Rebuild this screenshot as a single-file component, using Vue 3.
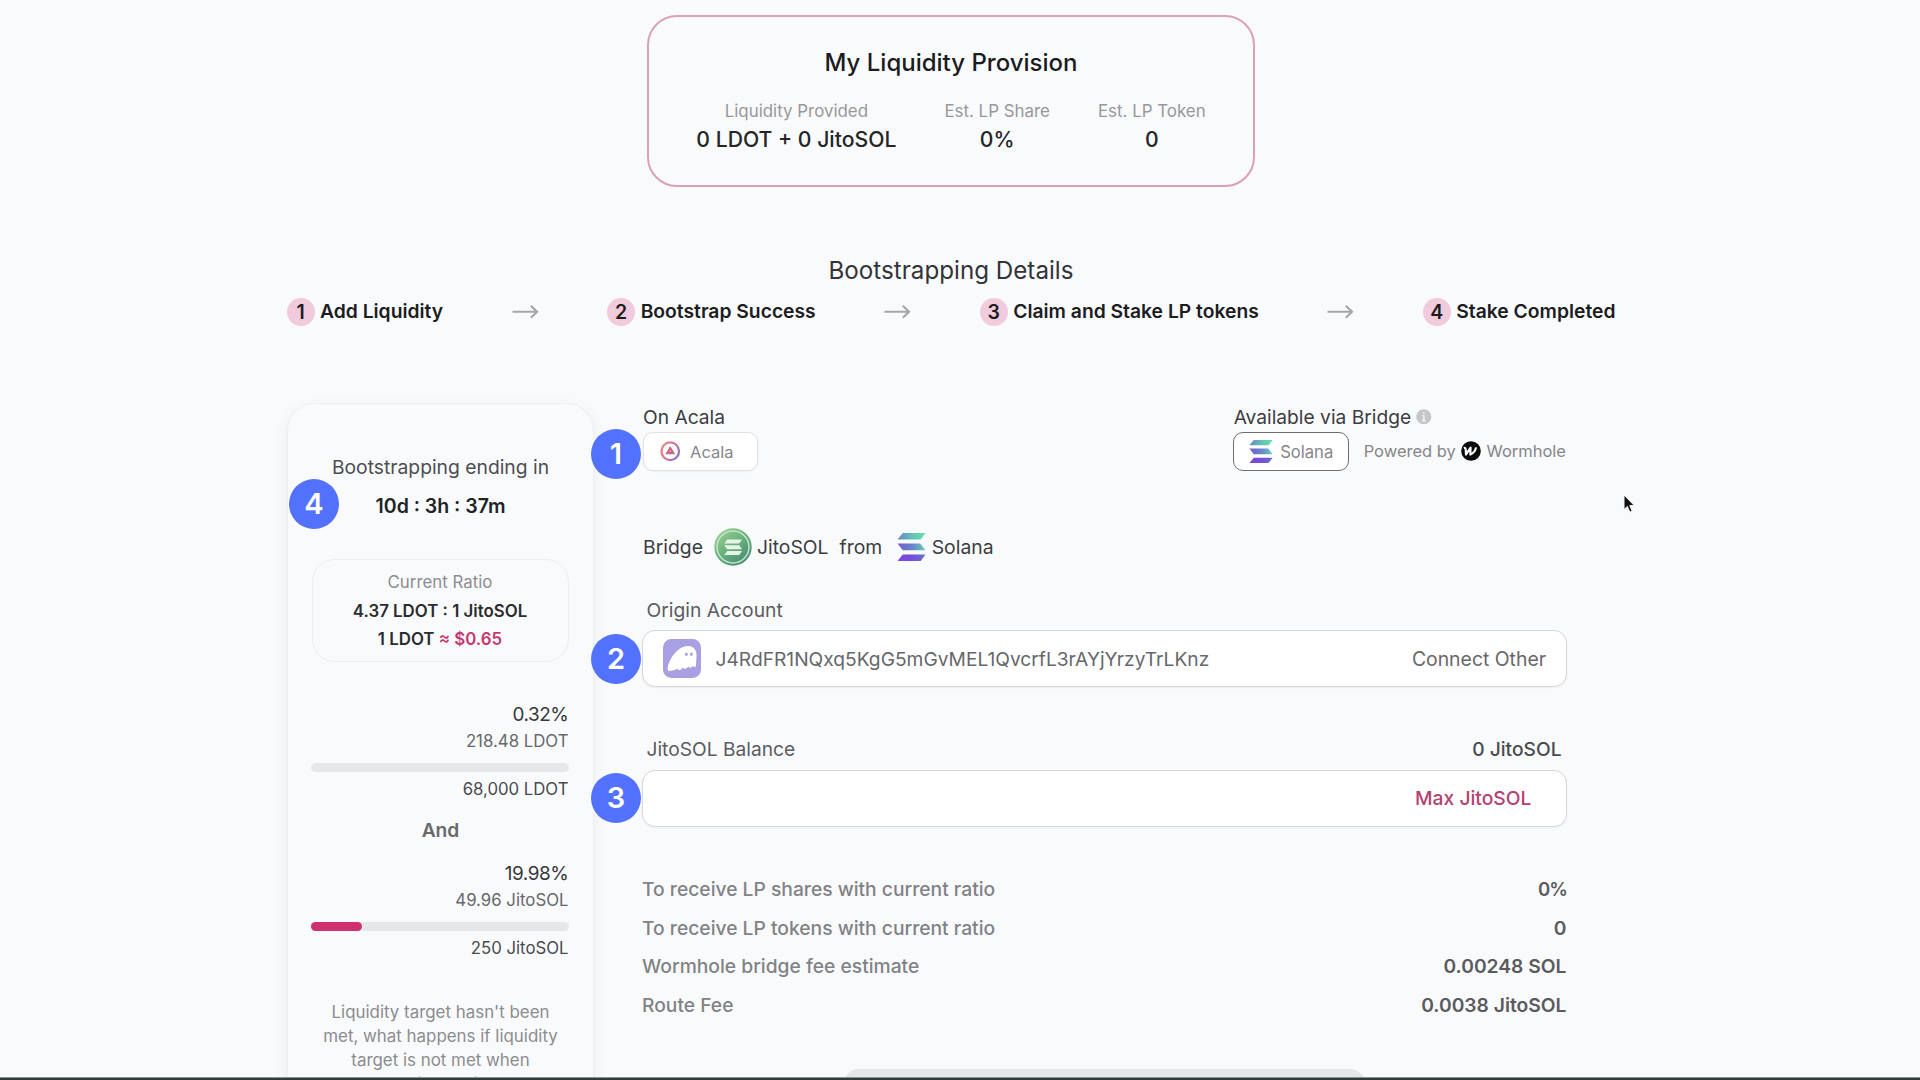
<script setup>
const stats = [
  { label: 'Liquidity Provided', value: '0 LDOT + 0 JitoSOL' },
  { label: 'Est. LP Share', value: '0%' },
  { label: 'Est. LP Token', value: '0' },
]
const steps = ['Add Liquidity', 'Bootstrap Success', 'Claim and Stake LP tokens', 'Stake Completed']
const targets = [
  { percent: '0.32%', current: '218.48 LDOT', goal: '68,000 LDOT', fill: 0 },
  { percent: '19.98%', current: '49.96 JitoSOL', goal: '250 JitoSOL', fill: 19.98 },
]
const summary = [
  { label: 'To receive LP shares with current ratio', value: '0%', tight: true },
  { label: 'To receive LP tokens with current ratio', value: '0' },
  { label: 'Wormhole bridge fee estimate', value: '0.00248 SOL' },
  { label: 'Route Fee', value: '0.0038 JitoSOL' },
]
</script>

<template>
  <div class="page">
    <section class="provision">
      <h2>My Liquidity Provision</h2>
      <div class="stats">
        <div v-for="s in stats" :key="s.label" class="stat">
          <span class="stat-label">{{ s.label }}</span>
          <span class="stat-value">{{ s.value }}</span>
        </div>
      </div>
    </section>

    <h2 class="details-title">Bootstrapping Details</h2>
    <div class="steps">
      <template v-for="(step, i) in steps" :key="step">
        <svg v-if="i" class="arrow" viewBox="0 0 28 16"><path d="M0.5 8H26M19.5 1.8L26 8L19.5 14.2" /></svg>
        <div class="step"><span class="step-num">{{ i + 1 }}</span>{{ step }}</div>
      </template>
    </div>

    <main class="main">
      <aside class="panel">
        <div class="ending">Bootstrapping ending in</div>
        <div class="countdown">10d : 3h : 37m<span class="badge badge-4">4</span></div>
        <div class="ratio">
          <span class="ratio-label">Current Ratio</span>
          <span>4.37 LDOT : 1 JitoSOL</span>
          <span>1 LDOT <em>≈ $0.65</em></span>
        </div>
        <template v-for="(t, i) in targets" :key="t.goal">
          <div v-if="i" class="and">And</div>
          <div class="target">
            <span class="percent">{{ t.percent }}</span>
            <span class="current">{{ t.current }}</span>
            <div class="track"><div v-if="t.fill" class="fill" :style="{ width: t.fill + '%' }"></div></div>
            <span class="goal">{{ t.goal }}</span>
          </div>
        </template>
        <p class="note">Liquidity target hasn't been<br />met, what happens if liquidity<br />target is not met when<br />bootstrapping period ends?</p>
      </aside>

      <section class="form">
        <div class="networks">
          <div>
            <div class="net-title">On Acala</div>
            <div class="chip chip-acala">
              <svg class="acala-icon" viewBox="0 0 20 20">
                <defs>
                  <linearGradient id="ac" x1="0" y1="0.2" x2="1" y2="0.9">
                    <stop offset="0" stop-color="#e8857c" /><stop offset="0.5" stop-color="#d0749a" /><stop offset="1" stop-color="#7a72d6" />
                  </linearGradient>
                </defs>
                <circle cx="10" cy="10" r="8.6" fill="none" stroke="url(#ac)" stroke-width="2.2" />
                <path d="M10 4.8L14.8 13H5.2Z" fill="#cf6482" />
                <path d="M10 9.2L10.8 10.6H9.2Z" fill="#fff" />
              </svg>
              <span>Acala</span>
              <span class="badge badge-1">1</span>
            </div>
          </div>
          <div class="bridge-net">
            <div class="net-title">Available via Bridge
              <svg class="info" viewBox="0 0 16 16"><circle cx="8" cy="8" r="7.8" fill="#c5c6c8" /><path d="M8 3.2V5M6.3 7H8.2V11.8M6 12H10.2" stroke="#eceef0" stroke-width="1.6" fill="none" /></svg>
            </div>
            <div class="bridge-row">
              <div class="chip chip-solana">
                <svg class="sol-small" viewBox="0 0 30 30">
                  <path d="M6 0.5H29.5L24.5 7.3H0.5Z" fill="url(#s1)" /><path d="M0.5 11.4H24L29.5 18.4H6Z" fill="url(#s2)" /><path d="M6 22.7H29.5L24.5 29.5H0.5Z" fill="url(#s3)" />
                </svg>
                <span>Solana</span>
              </div>
              <span class="powered">Powered by
                <svg class="wormhole" viewBox="0 0 20 20"><circle cx="10" cy="10" r="9.8" fill="#0a0a0a" /><path d="M2.8 7C4.5 6.3 5 7.5 4.9 13.6L9.6 6.6L9.3 13.6C13 12 14.6 9.5 15 6.4" fill="none" stroke="#fff" stroke-width="2.1" stroke-linejoin="round" /></svg>
                Wormhole</span>
            </div>
          </div>
        </div>

        <div class="bridge-line">
          <span>Bridge</span>
          <svg class="jito" viewBox="0 0 38 38">
            <defs>
              <linearGradient id="jt" x1="0.1" y1="0" x2="0.9" y2="1">
                <stop offset="0" stop-color="#9fd18f" /><stop offset="0.5" stop-color="#65b07e" /><stop offset="1" stop-color="#43846f" />
              </linearGradient>
            </defs>
            <circle cx="19" cy="19" r="18.7" fill="url(#jt)" />
            <circle cx="19" cy="19" r="16" fill="none" stroke="#c5e4c9" stroke-width="1.5" />
            <g fill="#e6f4e6">
              <path d="M13.2 11.5H28L25.2 15.6H10.2Z" /><path d="M10.2 17.2H25.2L28 21.3H13.2Z" /><path d="M13.2 23H28L25.2 27.1H10.2Z" />
            </g>
          </svg>
          <span>JitoSOL</span>
          <span class="from">from</span>
          <svg class="sol-big" viewBox="0 0 30 30">
            <defs>
              <linearGradient id="s1"><stop offset="0" stop-color="#6c84c4" /><stop offset="0.55" stop-color="#62c5b6" /><stop offset="1" stop-color="#66e2a6" /></linearGradient>
              <linearGradient id="s2"><stop offset="0" stop-color="#7259cd" /><stop offset="0.55" stop-color="#6889c8" /><stop offset="1" stop-color="#63d0b8" /></linearGradient>
              <linearGradient id="s3"><stop offset="0" stop-color="#7d45dc" /><stop offset="0.55" stop-color="#7450d8" /><stop offset="1" stop-color="#6a70d0" /></linearGradient>
            </defs>
            <path d="M6 0.5H29.5L24.5 7.3H0.5Z" fill="url(#s1)" /><path d="M0.5 11.4H24L29.5 18.4H6Z" fill="url(#s2)" /><path d="M6 22.7H29.5L24.5 29.5H0.5Z" fill="url(#s3)" />
          </svg>
          <span>Solana</span>
        </div>

        <div class="field-head">Origin Account</div>
        <div class="field">
          <svg class="phantom" viewBox="0 0 38 39">
            <rect width="38" height="39" rx="8.5" fill="#a99fe3" />
            <path d="M4.6 29.5C6 19.5 15 7 25 7C30.5 7 33.8 11 33.5 16.5L33 26.5C32.6 28.6 30.6 28.4 29.8 26.8C28.8 29 26.6 29.4 25.3 27.4C23.4 30.2 21 30.4 19.9 28.4C17.8 31.4 15.6 31.8 14.2 29.4C12.4 31 10.8 31.4 9.8 31.2C7.4 32.6 4.2 32.4 4.6 29.5Z" fill="#fff" />
            <ellipse cx="23.4" cy="15.2" rx="1.4" ry="1.8" fill="#a99fe3" /><ellipse cx="28.4" cy="15.2" rx="1.4" ry="1.8" fill="#a99fe3" />
          </svg>
          <span class="address">J4RdFR1NQxq5KgG5mGvMEL1QvcrfL3rAYjYrzyTrLKnz</span>
          <span class="connect">Connect Other</span>
          <span class="badge badge-f">2</span>
        </div>

        <div class="field-head balance"><span>JitoSOL Balance</span><span class="amount">0 JitoSOL</span></div>
        <div class="field">
          <span class="max">Max JitoSOL</span>
          <span class="badge badge-f">3</span>
        </div>

        <div class="summary">
          <div v-for="r in summary" :key="r.label" class="row"><span>{{ r.label }}</span><span class="row-value" :class="{ tight: r.tight }">{{ r.value }}</span></div>
        </div>
        <div class="action"></div>
      </section>
    </main>

    <div class="edge"></div>
    <svg class="cursor" viewBox="0 0 12 20"><path d="M1 1V15.5L4.4 12.4L6.8 18.2L9.2 17.2L6.8 11.6H11.3Z" fill="#111" stroke="#f4f4f4" stroke-width="1" /></svg>
  </div>
</template>

<style>
body { margin: 0; background: #f9fafc; overflow: hidden; }
</style>

<style scoped>
.page { position: relative; width: 1920px; height: 1080px; box-sizing: border-box; padding: 15px 18px 0 0; overflow: hidden; background: #f9fafc; font-family: Inter, "Liberation Sans", sans-serif; font-size: 19.3px; color: #3c3d40; white-space: nowrap; display: flex; flex-direction: column; align-items: center; }
h2 { margin: 0; font-size: 24px; line-height: 32px; font-weight: 500; color: #1b1c1e; }
.provision { width: 608px; height: 172px; flex: none; box-sizing: border-box; border: 2px solid #dca0b3; border-radius: 30px; padding-top: 30px; display: flex; flex-direction: column; align-items: center; }
.stats { display: flex; gap: 48px; margin-top: 19px; }
.stat { display: flex; flex-direction: column; align-items: center; }
.stat-label { font-size: 16.9px; line-height: 26px; color: #97989a; }
.stat-value { font-size: 21.2px; line-height: 30px; font-weight: 500; color: #242527; }
.details-title { margin-top: 68px; font-size: 24.2px; font-weight: 400; color: #333437; }
.steps { width: 1329px; height: 30px; margin-top: 10px; display: flex; justify-content: space-between; align-items: center; }
.step { display: flex; align-items: center; gap: 5.5px; font-size: 19.3px; font-weight: 600; color: #1c1d1f; line-height: 29px; }
.step-num { width: 28px; height: 28px; border-radius: 50%; background: #f1cbdc; text-align: center; line-height: 28px; font-size: 19.5px; }
.arrow { width: 27px; height: 15.5px; fill: none; stroke: #a5a6a8; stroke-width: 2.2; }
.main { width: 1329px; margin-top: 77px; display: flex; gap: 48.5px; align-items: flex-start; }

.panel { width: 307px; height: 760px; flex: none; box-sizing: border-box; padding: 50px 24px 0 25px; border: 1px solid #eeeff2; border-radius: 27px; box-shadow: 0 5px 14px rgba(70, 75, 90, 0.08); background: #f9fafc; }
.ending { text-align: center; line-height: 26px; color: #4d4e51; margin: 0 -10px; }
.countdown { position: relative; text-align: center; line-height: 28px; margin-top: 11.5px; font-size: 19.5px; font-weight: 600; color: #222326; }
.ratio { box-sizing: border-box; height: 103px; margin: 39.5px 0 0 -1px; padding-top: 8px; border: 1px solid #eceef1; border-radius: 23px; display: flex; flex-direction: column; align-items: center; font-size: 16.85px; font-weight: 600; line-height: 28.7px; color: #2b2c2f; }
.ratio-label { font-weight: 400; color: #8c8d90; }
.ratio em { font-style: normal; color: #c5386f; }
.target { display: flex; flex-direction: column; align-items: flex-end; }
.ratio + .target { margin-top: 39px; }
.percent { font-size: 18.9px; line-height: 27px; color: #37383b; letter-spacing: -0.4px; }
.current { font-size: 16.8px; line-height: 27px; color: #67686b; }
.track { width: 258px; height: 9px; border-radius: 5px; background: #e6e7e9; margin-top: 8px; }
.fill { height: 9px; border-radius: 5px; background: #cf3070; }
.goal { font-size: 16.75px; line-height: 27px; margin-top: 4px; color: #4a4b4e; }
.and { text-align: center; font-size: 19.2px; font-weight: 600; line-height: 28px; margin: 13px 0 16px; color: #68696c; }
.note { margin: 37.5px -10px 0; text-align: center; font-size: 16.9px; line-height: 24.2px; color: #8b8c8f; }

.form { width: 924.5px; flex: none; }
.networks { display: flex; justify-content: space-between; padding: 0 0.5px 0 1px; }
.net-title { line-height: 28px; display: flex; align-items: center; color: #3c3d40; font-size: 19.2px; }
.info { width: 15.5px; height: 15.5px; margin-left: 5px; }
.chip { position: relative; box-sizing: border-box; height: 39px; margin-top: 1px; border: 1px solid #e0e1e4; border-radius: 10px; background: #fff; display: flex; align-items: center; font-size: 16.5px; color: #85868a; }
.chip-acala { width: 115px; padding-left: 16px; gap: 9.5px; box-shadow: 0 1px 2px rgba(0, 0, 0, 0.05); }
.acala-icon { width: 20.5px; height: 20.5px; }
.bridge-row { display: flex; align-items: center; gap: 14.5px; margin-left: -1px; }
.chip-solana { width: 116.5px; padding-left: 15px; gap: 7.5px; border: 1px solid #6d6e71; font-size: 16.6px; }
.sol-small { width: 24px; height: 25px; }
.powered { display: flex; align-items: center; gap: 5.3px; padding-top: 0; font-size: 16.5px; color: #85868a; }
.wormhole { width: 20px; height: 20px; }
.bridge-line { height: 40px; margin-top: 56px; padding-left: 1px; display: flex; align-items: center; font-size: 19.35px; }
.jito { width: 38px; height: 38px; margin: 0 5px 0 11px; }
.from { margin-left: 11px; }
.sol-big { width: 29px; height: 30px; margin: 0 5.5px 0 15px; }
.field-head { margin-top: 28.5px; padding: 0 5px 0 4.5px; line-height: 28px; color: #5b5c5f; }
.balance { margin-top: 48px; display: flex; justify-content: space-between; font-size: 19.2px; }
.amount { font-weight: 500; color: #4a4b4e; }
.field { position: relative; box-sizing: border-box; height: 57px; margin-top: 6.5px; border: 1px solid #d5d7da; border-radius: 13px; background: #fff; display: flex; align-items: center; padding: 0 19.5px; box-shadow: 0 1px 2px rgba(0, 0, 0, 0.05); }
.phantom { width: 38px; height: 39px; }
.address { margin-left: 15px; font-size: 19.2px; color: #66676b; }
.connect { margin-left: auto; font-size: 19.4px; color: #66676b; }
.max { margin-left: auto; margin-right: 14.5px; font-weight: 500; color: #b4416f; }
.summary { margin-top: 43.5px; }
.row { display: flex; justify-content: space-between; line-height: 38.6px; font-size: 19.25px; font-weight: 500; color: #818285; }
.row-value { font-weight: 600; color: #5a5b5e; }
.tight { font-size: 18.6px; letter-spacing: -1px; margin-right: -0.5px; }
.action { width: 523px; height: 60px; margin: 44.5px 0 0 201px; border-radius: 16px; background: #e5e7e8; }

.badge { position: absolute; width: 50px; height: 50px; border-radius: 50%; background: #5271ff; color: #fff; text-align: center; font-size: 29px; line-height: 50px; font-weight: 600; }
.badge-1 { left: -53px; top: -4.5px; }
.badge-4 { left: -23.5px; top: -13px; }
.badge-f { left: -52px; top: 2.5px; }
.edge { position: absolute; left: 0; right: 0; bottom: 0; height: 2px; border-top: 1px solid #8b9490; background: #333b3a; }
.cursor { position: absolute; left: 1622.5px; top: 494px; width: 12px; height: 20px; }
</style>
